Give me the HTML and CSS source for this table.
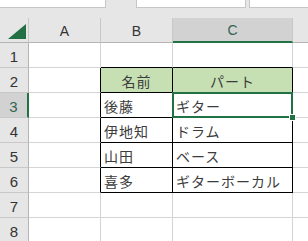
FILE: index.html
```html
<!DOCTYPE html>
<html lang="ja">
<head>
  <meta charset="UTF-8">
  <meta name="viewport" content="width=device-width, initial-scale=1.0">
  <title>バンドメンバー</title>
  <link rel="stylesheet" href="styles.css">
</head>
<body>
  <div class="toolbar">
    <div class="box name-box"></div>
    <div class="box formula-box"></div>
    <div class="box formula-end"></div>
  </div>

  <div class="sheet">
    <!-- 列見出し -->
    <div class="corner"><span class="tri"></span></div>
    <div class="col-head">A</div>
    <div class="col-head">B</div>
    <div class="col-head active">C</div>
    <div class="col-head rest"></div>

    <!-- 1 -->
    <div class="row-head">1</div>
    <div class="cell"></div>
    <div class="cell t-bottom"></div>
    <div class="cell t-bottom"></div>
    <div class="cell rest"></div>

    <!-- 2 -->
    <div class="row-head">2</div>
    <div class="cell t-right"></div>
    <div class="cell t-box title">名前</div>
    <div class="cell t-box title">パート</div>
    <div class="cell rest"></div>

    <!-- 3 -->
    <div class="row-head active">3</div>
    <div class="cell t-right"></div>
    <div class="cell t-box">後藤</div>
    <div class="cell t-box selected">ギター</div>
    <div class="cell rest"></div>

    <!-- 4 -->
    <div class="row-head">4</div>
    <div class="cell t-right"></div>
    <div class="cell t-box">伊地知</div>
    <div class="cell t-box">ドラム</div>
    <div class="cell rest"></div>

    <!-- 5 -->
    <div class="row-head">5</div>
    <div class="cell t-right"></div>
    <div class="cell t-box">山田</div>
    <div class="cell t-box">ベース</div>
    <div class="cell rest"></div>

    <!-- 6 -->
    <div class="row-head">6</div>
    <div class="cell t-right"></div>
    <div class="cell t-box">喜多</div>
    <div class="cell t-box">ギターボーカル</div>
    <div class="cell rest"></div>

    <!-- 7 -->
    <div class="row-head">7</div>
    <div class="cell"></div>
    <div class="cell"></div>
    <div class="cell"></div>
    <div class="cell rest"></div>

    <!-- 8 -->
    <div class="row-head">8</div>
    <div class="cell"></div>
    <div class="cell"></div>
    <div class="cell"></div>
    <div class="cell rest"></div>
  </div>
</body>
</html>
```

FILE: styles.css
```css
body {
  margin: 0;
  background: #e6e6e6;
  font-family: "Liberation Sans", Arial, sans-serif;
  overflow: hidden;
}

/* 上部の名前ボックスと数式バー */
.toolbar {
  display: flex;
  height: 18px;
}

.box {
  height: 7px;
  background: #fff;
  border: 1px solid #c6c6c6;
  border-top: none;
  box-sizing: content-box;
}

.name-box {
  width: 105px;
  border-left: none;
}

.formula-box {
  width: 108px;
  margin-left: 30px;
}

.formula-end {
  flex: 1;
  margin-left: 3px;
  border-right: none;
}

/* シート本体 */
.sheet {
  display: grid;
  grid-template-columns: 29px 72px 72px 120px 1fr;
  grid-auto-rows: 25px;
  background: #fff;
}

.sheet > div {
  box-sizing: border-box;
}

.corner,
.col-head {
  background: #e6e6e6;
  border-right: 1px solid #c8c8c8;
  border-bottom: 1px solid #b4b4b4;
}

.corner {
  display: flex;
  align-items: flex-end;
  justify-content: flex-end;
  padding: 0 2px 3px 0;
}

.tri {
  width: 18px;
  height: 15px;
  background: #237044;
  clip-path: polygon(100% 0, 100% 100%, 0 100%);
}

.col-head {
  display: flex;
  align-items: center;
  justify-content: center;
  font-size: 14px;
  color: #333;
  padding-top: 1px;
}

.col-head.active {
  background: #d2d2d2;
  color: #2f6452;
  border-bottom: 2px solid #217346;
}

.col-head.rest {
  border-right: none;
}

.row-head {
  background: #e6e6e6;
  border-right: 1px solid #b4b4b4;
  border-bottom: 1px solid #c8c8c8;
  display: flex;
  align-items: center;
  justify-content: center;
  font-size: 15px;
  color: #333;
  padding-top: 2px;
}

.row-head.active {
  background: #d2d2d2;
  color: #2f6452;
  border-right: 2px solid #217346;
}

.cell {
  border-right: 1px solid #d4d4d4;
  border-bottom: 1px solid #d4d4d4;
  display: flex;
  align-items: center;
  padding: 2px 0 0 3px;
  font-family: "Noto Sans CJK JP", sans-serif;
  font-size: 14px;
  letter-spacing: 1px;
  color: #3c3c3c;
  white-space: nowrap;
}

.cell.rest {
  border-right: none;
}

/* 表の罫線 */
.t-right {
  border-right-color: #000;
}

.t-bottom {
  border-bottom-color: #000;
}

.t-box {
  border-right-color: #000;
  border-bottom-color: #000;
}

.title {
  background: #c6e0b4;
  justify-content: center;
  padding-left: 0;
}

/* 選択中のセル */
.selected {
  position: relative;
}

.selected::before {
  content: "";
  position: absolute;
  top: -1px;
  left: -1px;
  right: -1px;
  bottom: -1px;
  border: 2px solid #217346;
}

.selected::after {
  content: "";
  position: absolute;
  right: -4px;
  bottom: -4px;
  width: 5px;
  height: 5px;
  background: #217346;
  border: 1px solid #fff;
}
```
